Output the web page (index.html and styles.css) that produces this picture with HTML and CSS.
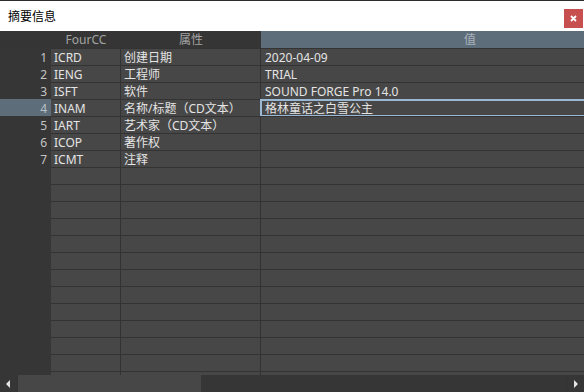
FILE: index.html
```html
<!DOCTYPE html>
<html lang="zh-CN">

<head>
    <meta charset="UTF-8">
    <title>摘要信息</title>
    <link rel="stylesheet" href="styles.css">
</head>

<body>
    <div class="window">
        <div class="titlebar">
            <span class="title">摘要信息</span>
            <button class="close" title="关闭">
                <svg width="7" height="7" viewBox="0 0 7 7">
                    <path d="M1 1 L6 6 M6 1 L1 6" stroke="#fff" stroke-width="1.8" />
                </svg>
            </button>
        </div>

        <div class="grid-wrap">
            <div class="grid" id="grid">
                <div class="hd hd-num"></div>
                <div class="hd hd-code">FourCC</div>
                <div class="hd hd-name">属性</div>
                <div class="hd hd-value">值</div>
            </div>
        </div>

        <div class="hscroll">
            <div class="sb-btn sb-left"><span class="arrow-left"></span></div>
            <div class="sb-track">
                <div class="sb-thumb"></div>
            </div>
            <div class="sb-btn sb-right"><span class="arrow-right"></span></div>
        </div>
    </div>

    <script>
        const rows = [
            ['ICRD', '创建日期', '2020-04-09'],
            ['IENG', '工程师', 'TRIAL'],
            ['ISFT', '软件', 'SOUND FORGE Pro 14.0'],
            ['INAM', '名称/标题（CD文本）', '格林童话之白雪公主'],
            ['IART', '艺术家（CD文本）', ''],
            ['ICOP', '著作权', ''],
            ['ICMT', '注释', '']
        ];
        const selected = 3;
        const grid = document.getElementById('grid');

        function cell(cls, text) {
            const d = document.createElement('div');
            d.className = 'cell ' + cls;
            d.textContent = text;
            grid.appendChild(d);
            return d;
        }

        // 20 rows fill the visible area, the last one is cut by the scrollbar
        for (let i = 0; i < 20; i++) {
            const r = rows[i] || ['', '', ''];
            const num = cell('c-num', rows[i] ? i + 1 : '');
            cell('c-code', r[0]);
            cell('c-name', r[1]);
            const val = cell('c-value', r[2]);
            if (i === selected) {
                num.classList.add('is-selected');
                val.classList.add('is-editing');
            }
        }
    </script>
</body>

</html>
```

FILE: styles.css
```css
* {
    margin: 0;
    padding: 0;
    box-sizing: border-box;
}

body {
    width: 584px;
    height: 392px;
    overflow: hidden;
    background-color: #363636;
    font-family: "Noto Sans", "Noto Sans CJK SC", sans-serif;
    font-size: 12px;
}

.window {
    display: flex;
    flex-direction: column;
    height: 392px;
}

.titlebar {
    display: flex;
    align-items: center;
    justify-content: space-between;
    height: 31px;
    border-top: 1px solid #2c2c2c;
    background-color: #fff;
    padding: 0 1px 0 8px;
}

.title {
    color: #000;
    font-size: 12px;
    margin-top: -1px;
}

.close {
    width: 19px;
    height: 19px;
    border: none;
    background-color: #c84f50;
    display: flex;
    align-items: center;
    justify-content: center;
    margin-top: 4px;
}

.grid-wrap {
    flex: 1;
    overflow: hidden;
    background-color: #363636;
}

.grid {
    display: grid;
    grid-template-columns: 51px 70px 140px 418px;
    grid-auto-rows: 17px;
    width: 679px;
}

.hd {
    height: 17px;
    line-height: 17px;
    text-align: center;
    color: #a3a3a3;
    background-color: #353535;
}

.hd-value {
    background-color: #5e6d7a;
    color: #a9b2ba;
}

.cell {
    position: relative;
    border-top: 1px solid #333;
    background-color: #474747;
    color: #e4e4e4;
    line-height: 15px;
    padding-top: 1px;
    padding-left: 3px;
    white-space: nowrap;
}

.c-num {
    background-color: #363636;
    border-top-color: #363636;
    color: #c4c4c4;
    text-align: right;
    padding-right: 4px;
}

.c-code,
.c-name {
    border-right: 1px solid #333;
}

.c-value {
    padding-left: 4px;
}

.c-num.is-selected {
    background-color: #5e6d7a;
    border-top-color: #5e6d7a;
    color: #b8c0c8;
}

.c-value.is-editing::after {
    content: "";
    position: absolute;
    left: -1px;
    right: 0;
    top: -1px;
    bottom: -1px;
    border: 2px solid #9ab8d3;
}

.hscroll {
    display: flex;
    height: 17px;
    background-color: #363636;
}

.sb-btn {
    width: 17px;
    display: flex;
    align-items: center;
    justify-content: center;
}

.sb-track {
    flex: 1;
    border-left: 1px solid #333;
    border-right: 1px solid #333;
}

.sb-thumb {
    width: 183px;
    height: 17px;
    background-color: #474747;
}

.arrow-left {
    width: 0;
    height: 0;
    border-top: 4px solid transparent;
    border-bottom: 4px solid transparent;
    border-right: 4px solid #e6e6e6;
    margin-left: -2px;
}

.arrow-right {
    width: 0;
    height: 0;
    border-top: 4px solid transparent;
    border-bottom: 4px solid transparent;
    border-left: 4px solid #e6e6e6;
    margin-left: 1px;
}
```
